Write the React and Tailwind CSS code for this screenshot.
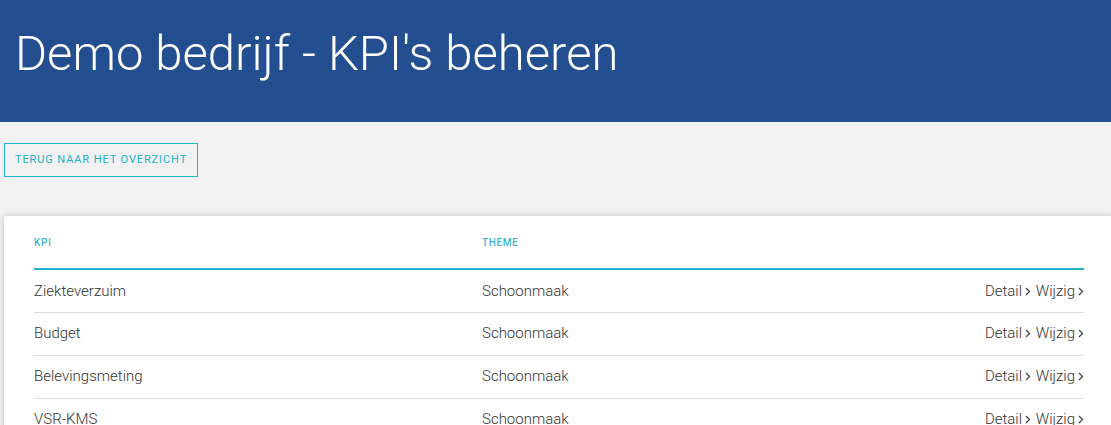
const rows = [
  { kpi: 'Ziekteverzuim', theme: 'Schoonmaak' },
  { kpi: 'Budget', theme: 'Schoonmaak' },
  { kpi: 'Belevingsmeting', theme: 'Schoonmaak' },
  { kpi: 'VSR-KMS', theme: 'Schoonmaak' },
  { kpi: 'Klachten', theme: 'Schoonmaak' },
];

const Chevron = () => (
  <svg width="6" height="9" viewBox="0 0 6 9" className="inline-block ml-[3px] mb-[1px]">
    <path d="M1 1 L4.5 4.5 L1 8" fill="none" stroke="#444" strokeWidth="1.3" />
  </svg>
);

const App = () => {
  return (
    <div
      className="h-screen w-full overflow-hidden bg-[#f1f1f1]"
      style={{ fontFamily: 'Roboto, "Noto Sans", sans-serif' }}
    >
      <header className="h-[122px] bg-[#234e8f] px-[15px] pt-[25px]">
        <h1 className="text-[49px] font-light leading-[58px] text-white">
          Demo bedrijf - KPI's beheren
        </h1>
      </header>

      <div className="px-1 pt-[21px]">
        <button className="h-[34px] border border-[#21b1c9] px-[10px] text-[11px] tracking-[0.9px] text-[#21b1c9] uppercase">
          Terug naar het overzicht
        </button>
      </div>

      <div className="mt-[39px] ml-1 w-[1110px] rounded-tl-[3px] bg-white px-[30px] pt-[20px] pb-4 shadow-[0_0_6px_rgba(0,0,0,0.18)]">
        <table className="w-full border-collapse text-left">
          <thead>
            <tr className="border-b-2 border-[#21b1c9]">
              <th className="w-[448px] pb-[18px] align-middle text-[10px] leading-[14px] font-medium tracking-[0.6px] text-[#3db5cd] uppercase">
                KPI
              </th>
              <th className="pb-[18px] align-middle text-[10px] leading-[14px] font-medium tracking-[0.6px] text-[#3db5cd] uppercase">
                Theme
              </th>
              <th></th>
            </tr>
          </thead>
          <tbody>
            {rows.map((r) => (
              <tr key={r.kpi} className="border-b border-[#dcdcdc]">
                <td className="h-[43px] align-middle text-[15px] font-light text-[#333]">{r.kpi}</td>
                <td className="align-middle text-[15px] font-light text-[#333]">{r.theme}</td>
                <td className="text-right align-middle text-[15px] font-light text-[#333]">
                  Detail<Chevron /> <span className="ml-[1px]">Wijzig</span><Chevron />
                </td>
              </tr>
            ))}
          </tbody>
        </table>
      </div>
    </div>
  );
};

export default App;
